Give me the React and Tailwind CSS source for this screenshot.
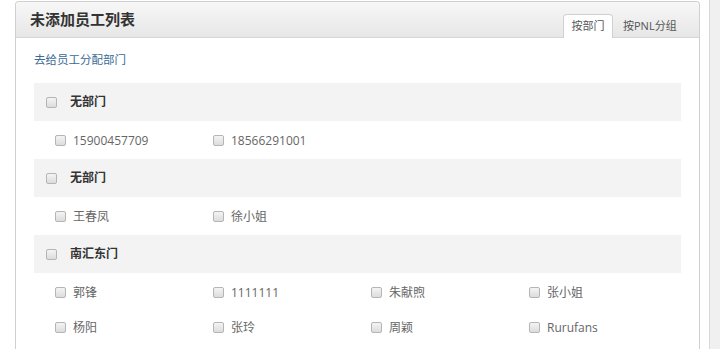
import React from "react";

const Box = () => (
  <span className="inline-block w-[11px] h-[11px] shrink-0 rounded-[2px] border border-[#b5b5b5] bg-gradient-to-b from-[#f4f4f4] to-[#dcdcdc]" />
);

const groups = [
  { name: "无部门", members: ["15900457709", "18566291001"] },
  { name: "无部门", members: ["王春凤", "徐小姐"] },
  { name: "南汇东门", members: ["郭锋", "1111111", "朱献煦", "张小姐", "杨阳", "张玲", "周颖", "Rurufans"] },
];

export default function App() {
  return (
    <div
      className="flex w-[720px] h-[349px] bg-white overflow-hidden"
      style={{ fontFamily: '"Open Sans", "Noto Sans CJK SC", sans-serif' }}
    >
      <div className="w-[15px] shrink-0" />
      <div className="w-[685px] shrink-0 mt-[1px] border border-b-0 border-[#d0d0d0] rounded-t-[4px] flex flex-col">
        <div className="h-[36px] shrink-0 flex items-end justify-between rounded-t-[4px] bg-gradient-to-b from-[#f7f7f7] to-[#e7e7e7] border-b border-[#d6d6d6] pl-[14px] pr-[14px]">
          <div className="self-center text-[15px] font-bold text-[#333] leading-none">未添加员工列表</div>
          <div className="flex items-end text-[11px] text-[#555] mb-[-1px]">
            <div className="h-[24px] w-[50px] flex items-center justify-center bg-white border border-b-0 border-[#d0d0d0] rounded-t-[4px]">按部门</div>
            <div className="h-[24px] w-[72px] pl-[10px] flex items-center">按PNL分组</div>
          </div>
        </div>
        <div className="px-[18px] pt-[12px]">
          <div className="h-[20px] leading-[20px] text-[11.5px] text-[#3b6a96] mb-[13px]">去给员工分配部门</div>
          {groups.map((g, i) => (
            <div key={i}>
              <div className="h-[38px] bg-[#f3f3f3] flex items-center pl-[12px] gap-[13px]">
                <Box />
                <span className="text-[12px] font-bold text-[#333]">{g.name}</span>
              </div>
              <div className="pt-[2px] pb-[1px] pl-[21px] grid grid-cols-[158px_158px_158px_158px]">
                {g.members.map((m, j) => (
                  <div key={j} className="h-[35px] flex items-center gap-[7px]">
                    <Box />
                    <span className="text-[12px] text-[#666]">{m}</span>
                  </div>
                ))}
              </div>
            </div>
          ))}
        </div>
      </div>
      <div className="w-[9px] shrink-0" />
      <div className="w-[11px] shrink-0 border-l border-[#d8d8d8] bg-[#f0f0f0]" />
    </div>
  );
}
